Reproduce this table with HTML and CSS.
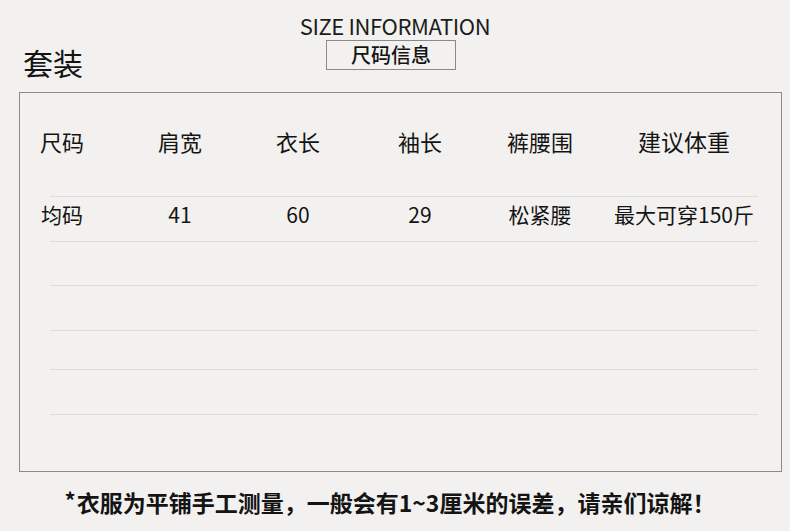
FILE: index.html
```html
<!DOCTYPE html>
<html lang="zh-CN">
<head>
<meta charset="utf-8">
<title>尺码信息</title>
<link rel="stylesheet" href="styles.css">
</head>
<body>
<div class="page">
  <header class="head">
    <div class="set-title">套装</div>
    <div class="title-block">
      <div class="en-title">SIZE INFORMATION</div>
      <div class="badge">尺码信息</div>
    </div>
    <div class="head-spacer"></div>
  </header>

  <section class="size-box">
    <div class="row row-head">
      <div class="cell">尺码</div>
      <div class="cell">肩宽</div>
      <div class="cell">衣长</div>
      <div class="cell">袖长</div>
      <div class="cell">裤腰围</div>
      <div class="cell cell-last">建议体重</div>
    </div>
    <div class="row row-data h45">
      <div class="cell">均码</div>
      <div class="cell">41</div>
      <div class="cell">60</div>
      <div class="cell">29</div>
      <div class="cell">松紧腰</div>
      <div class="cell cell-last">最大可穿150斤</div>
    </div>
    <div class="row row-empty h44"></div>
    <div class="row row-empty h45"></div>
    <div class="row row-empty h39"></div>
    <div class="row row-empty h45"></div>
    <div class="row row-empty h-end"></div>
  </section>

  <p class="note"><span class="star">*</span>衣服为平铺手工测量，一般会有1~3厘米的误差，请亲们谅解！</p>
</div>
</body>
</html>
```

FILE: styles.css
```css
html, body {
  margin: 0;
  padding: 0;
}

body {
  background: #f2f1ef;
  color: #141414;
  font-family: "Noto Sans CJK SC", "Noto Sans", sans-serif;
  width: 790px;
  height: 531px;
  overflow: hidden;
}

.page {
  display: flex;
  flex-direction: column;
}

.head {
  display: grid;
  grid-template-columns: 1fr auto 1fr;
  align-items: end;
  padding-top: 10px;
  height: 82px;
  box-sizing: border-box;
}

.set-title {
  font-size: 30px;
  line-height: 36px;
  padding-left: 23px;
  padding-bottom: 2px;
}

.title-block {
  display: flex;
  flex-direction: column;
  align-items: center;
  align-self: start;
}

.en-title {
  font-size: 22px;
  line-height: 30px;
  letter-spacing: -0.4px;
  color: #1c1c1c;
}

.badge {
  margin-top: 0;
  margin-right: 8px;
  width: 128px;
  height: 28px;
  border: 1px solid #8a8a8a;
  font-size: 20px;
  font-weight: 500;
  line-height: 28px;
  text-align: center;
}

.size-box {
  margin: 10px 8px 0 19px;
  border: 1px solid #8a8a8a;
}

.row {
  display: grid;
  grid-template-columns: 84px 152px 84px 160px 80px 1fr;
  box-sizing: border-box;
}

.cell {
  text-align: center;
  white-space: nowrap;
}

.cell-last {
  padding-left: 7px;
}

.row-head {
  height: 103px;
  align-items: center;
  font-size: 22px;
  padding-bottom: 7px;
}

.row-head .cell-last {
  font-size: 23px;
}

.row-data,
.row-empty {
  background: linear-gradient(#dedddb, #dedddb) 30px 0 / 708px 1px no-repeat;
}

.row-data {
  font-size: 21px;
  line-height: 26px;
  padding-top: 5px;
}

.h45 { height: 45px; }
.h44 { height: 44px; }
.h39 { height: 39px; }
.h-end { height: 57px; }

.note {
  margin: 12px 0 0 0;
  text-align: center;
  font-size: 23px;
  font-weight: 700;
  line-height: 30px;
  padding-right: 10px;
}

.star {
  display: inline-block;
  font-size: 22px;
  vertical-align: 3px;
  margin-right: 1px;
}
```
